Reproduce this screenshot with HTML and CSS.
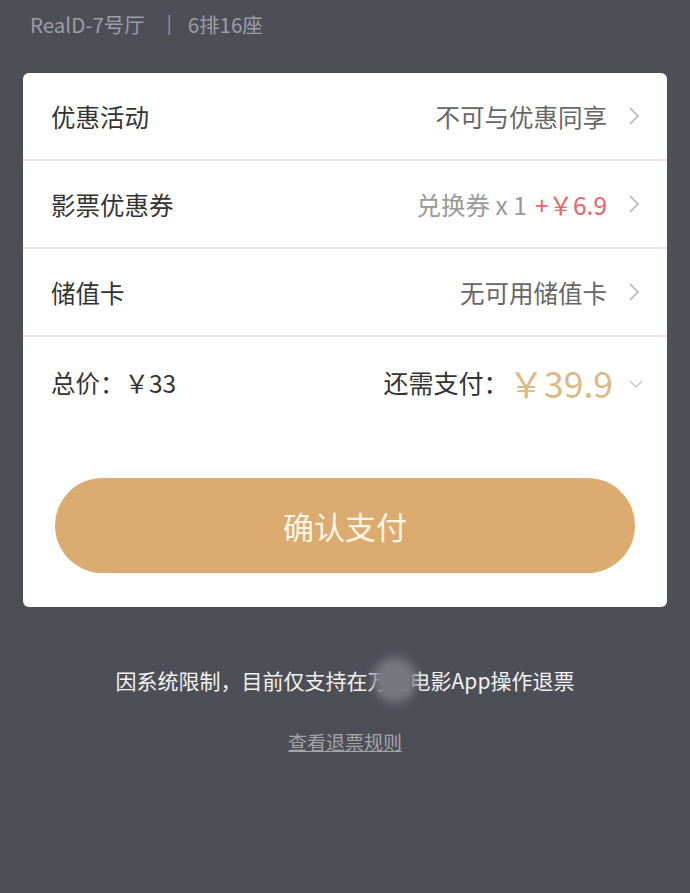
FILE: index.html
```html
<!DOCTYPE html>
<html lang="zh-CN">
<head>
<meta charset="utf-8">
<link rel="stylesheet" href="styles.css">
</head>
<body>
<div class="page">
  <div class="hall"><span>RealD-7号厅</span><span class="sep">|</span><span>6排16座</span></div>
  <div class="card">
    <div class="row">
      <span class="label">优惠活动</span>
      <span class="value">不可与优惠同享<svg class="chev" viewBox="0 0 12 20"><path d="M2 2 L10 10 L2 18" /></svg></span>
    </div>
    <div class="row">
      <span class="label">影票优惠券</span>
      <span class="value light">兑换券 x 1 <span class="red">+￥6.9</span><svg class="chev" viewBox="0 0 12 20"><path d="M2 2 L10 10 L2 18" /></svg></span>
    </div>
    <div class="row">
      <span class="label">储值卡</span>
      <span class="value">无可用储值卡<svg class="chev" viewBox="0 0 12 20"><path d="M2 2 L10 10 L2 18" /></svg></span>
    </div>
    <div class="total">
      <span class="label">总价：￥33</span>
      <span class="pay">还需支付：<span class="amount">￥39.9</span><svg class="down" viewBox="0 0 14 10"><path d="M1 2 L7 8 L13 2" /></svg></span>
    </div>
    <div class="btn-wrap"><button class="confirm">确认支付</button></div>
  </div>
  <p class="notice">因系统限制，目前仅支持在<span class="masked">万达<span class="blur"></span></span>电影App操作退票</p>
  <p class="rules"><a href="#">查看退票规则</a></p>
</div>
</body>
</html>
```
FILE: styles.css
```css
* { box-sizing: border-box; }
html, body {
  margin: 0;
  padding: 0;
  background: #4d4f57;
  font-family: "Noto Sans CJK SC", "Noto Sans", sans-serif;
}
.page {
  width: 690px;
  height: 893px;
  padding: 0 23px;
}
.hall {
  height: 73px;
  padding: 9px 0 0 7px;
  font-size: 20.5px;
  color: #9b9da4;
  display: flex;
}
.hall .sep { margin: 0 16px 0 22px; font-size: 18px; }
.card {
  background: #fff;
  border-radius: 6px;
  overflow: hidden;
}
.row {
  height: 88px;
  border-bottom: 2px solid #e4e4e4;
  display: flex;
  align-items: center;
  justify-content: space-between;
  padding: 0 27px 0 28px;
}
.label {
  font-size: 24.5px;
  color: #333;
}
.value {
  display: flex;
  align-items: center;
  font-size: 24.5px;
  color: #666;
}
.value.light { color: #999; }
.red { color: #e8636a; margin-left: 8px; }
.chev {
  width: 12px;
  height: 20px;
  margin-left: 21px;
  fill: none;
  stroke: #b4b4b4;
  stroke-width: 1.6;
}
.total {
  height: 90px;
  display: flex;
  align-items: center;
  justify-content: space-between;
  padding: 0 24px 0 28px;
}
.pay {
  display: flex;
  align-items: center;
  font-size: 25px;
  color: #333;
}
.amount {
  font-size: 35.5px;
  color: #dab983;
  margin-left: 0;
}
.down {
  width: 14px;
  height: 10px;
  margin-left: 16px;
  margin-top: 4px;
  fill: none;
  stroke: #c4c4c4;
  stroke-width: 1.4;
}
.btn-wrap {
  padding: 51px 32px 34px 32px;
}
.confirm {
  width: 100%;
  height: 95px;
  border: none;
  border-radius: 48px;
  background: #dcab6f;
  color: #fff6e6;
  font-family: inherit;
  font-size: 31px;
}
.notice {
  margin: 58px 0 0;
  text-align: center;
  font-size: 21px;
  color: #f2f2f2;
}
.masked { position: relative; }
.blur {
  position: absolute;
  left: 5px;
  top: -8px;
  width: 44px;
  height: 46px;
  border-radius: 50%;
  background: #76787f;
  filter: blur(5px);
}
.rules {
  margin: 33px 0 0;
  text-align: center;
  font-size: 19px;
}
.rules a {
  color: #a2a4aa;
  text-decoration: underline;
}
```
